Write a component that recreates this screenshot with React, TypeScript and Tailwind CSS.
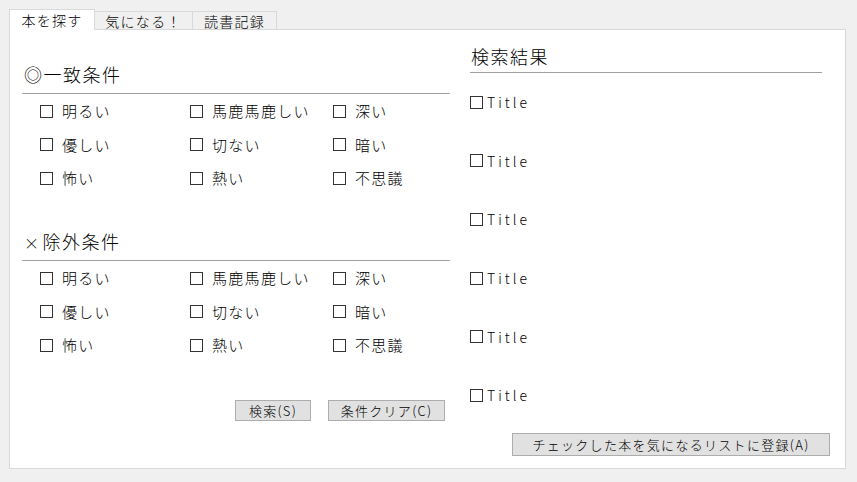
import React from "react"

const moods = [
  ["明るい", "馬鹿馬鹿しい", "深い"],
  ["優しい", "切ない", "暗い"],
  ["怖い", "熱い", "不思議"],
]

const rowHeights = ["h-[34px]", "h-[33px]", "h-[34px]"]

function Box() {
  return <span className="inline-block w-[13px] h-[13px] border border-[#333333] bg-white shrink-0" />
}

function ConditionGroup({ mark, title }: { mark: string; title: string }) {
  return (
    <div>
      <div className="h-[32px] border-b border-[#a0a0a0] pl-[2px] text-[18px] leading-[24px] tracking-[1.5px] font-light">
        <span className={mark === "×" ? "text-[15px] mr-[2px]" : ""}>{mark}</span>
        {title}
      </div>
      <div className="pl-[18px]">
        {moods.map((row, i) => (
          <div key={i} className={`flex items-center ${rowHeights[i]}`}>
            {row.map((label, j) => (
              <label
                key={label}
                className={`flex items-center gap-[9px] ${j === 0 ? "w-[150px]" : j === 1 ? "w-[143px]" : "w-[100px]"}`}
              >
                <Box />
                <span className="text-[15px] leading-[20px] tracking-[1.3px] font-light">{label}</span>
              </label>
            ))}
          </div>
        ))}
      </div>
    </div>
  )
}

function Button({ children, className }: { children: React.ReactNode; className: string }) {
  return (
    <button
      className={`h-[21px] bg-[#e1e1e1] border border-[#adadad] text-[13px] leading-[19px] tracking-[1.3px] font-light text-black ${className}`}
    >
      {children}
    </button>
  )
}

export default function App() {
  const tabs = ["本を探す", "気になる！", "読書記録"]
  const tabWidths = ["w-[86px]", "w-[98px]", "w-[84px]"]

  return (
    <div className="w-[857px] h-[482px] bg-[#f0f0f0] pt-[9px] pl-[9px] text-black font-['Noto_Sans_CJK_JP',sans-serif] overflow-hidden">
      {/* tab strip */}
      <div className="flex items-end h-[21px] relative z-10">
        {tabs.map((t, i) =>
          i === 0 ? (
            <div
              key={t}
              className={`${tabWidths[i]} h-[21px] bg-white border border-b-0 border-[#d9d9d9] flex items-center justify-center text-[14px] leading-[18px] tracking-[1.3px] font-light`}
            >
              {t}
            </div>
          ) : (
            <div
              key={t}
              className={`${tabWidths[i]} h-[19px] bg-[#f0f0f0] border border-l-0 border-[#d9d9d9] flex items-center justify-center text-[14px] leading-[18px] tracking-[1.3px] font-light`}
            >
              {t}
            </div>
          )
        )}
      </div>

      {/* panel */}
      <div className="w-[837px] h-[440px] -mt-px bg-white border border-[#d9d9d9] flex pl-[12px]">
        {/* left column */}
        <div className="w-[428px] flex flex-col">
          <div className="mt-[32px]">
            <ConditionGroup mark="◎" title="一致条件" />
          </div>
          <div className="mt-[34px]">
            <ConditionGroup mark="×" title="除外条件" />
          </div>
          <div className="flex justify-end gap-[17px] pr-[5px] mt-[38px]">
            <Button className="w-[76px]">検索(S)</Button>
            <Button className="w-[117px]">条件クリア(C)</Button>
          </div>
        </div>

        {/* right column */}
        <div className="ml-[20px] w-[360px] flex flex-col">
          <div className="mt-[14px] w-[352px] h-[29px] border-b border-[#a0a0a0] pl-px text-[18px] leading-[24px] tracking-[1.5px] font-light">
            検索結果
          </div>
          <div className="flex flex-col">
            {[0, 1, 2, 3, 4, 5].map((i) => (
              <div key={i} className="h-[58.6px] flex items-center gap-[4px]">
                <Box />
                <span className="text-[14px] leading-[18px] tracking-[3px] font-light">Title</span>
              </div>
            ))}
          </div>
          <div className="flex justify-end mt-[8px]">
            <Button className="w-[318px] h-[23px]">チェックした本を気になるリストに登録(A)</Button>
          </div>
        </div>
      </div>
    </div>
  )
}
